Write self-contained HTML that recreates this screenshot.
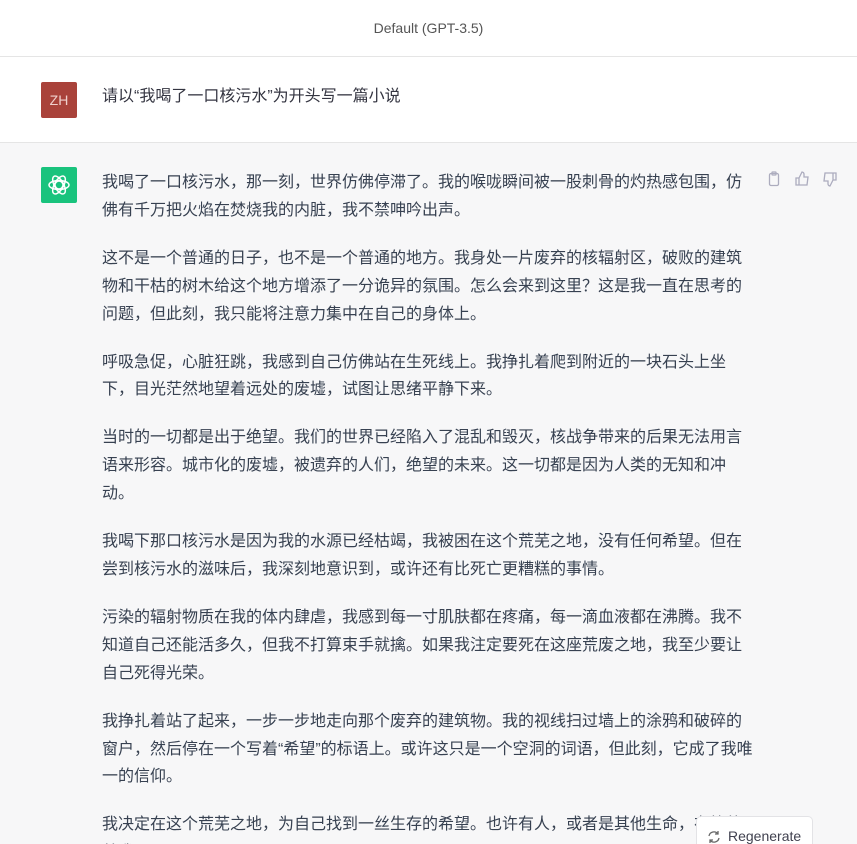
<!DOCTYPE html>
<html><head><meta charset="utf-8"><style>
*{margin:0;padding:0;box-sizing:border-box}
html,body{width:857px;height:844px;overflow:hidden}
body{background:#fff;font-family:"Liberation Sans","Noto Sans CJK SC",sans-serif;color:#374151}
.hdr{height:57px;border-bottom:1px solid #e5e5e5;text-align:center;font-size:14px;line-height:56px;color:#555}
.user{height:86px;border-bottom:1px solid #e5e5e5;position:relative}
.av{position:absolute;left:41px;width:36px;height:36px;border-radius:2px}
.user .av{top:25px;background:#a9423a;color:#f0d0cc;font-size:14px;text-align:center;line-height:36px}
.user p{position:absolute;left:102px;top:28px;font-size:16px;line-height:24px;color:#343541}
.bot{background:#f7f7f8;height:701px;position:relative;overflow:hidden}
.bot .av{top:24px;background:#19c37d}
.txt{position:absolute;left:102px;top:26px;width:680px;height:675px;overflow:hidden;font-size:16px;line-height:27.9px;color:#374151}
.txt p{margin-bottom:20px;width:646px}
.txt p.w{width:680px}
.ic{position:absolute;top:28px;left:766px;display:flex;gap:12px}
.regen{position:absolute;left:696px;top:673px;width:117px;height:28px;overflow:hidden;background:#fff;border:1px solid #e3e3e6;border-bottom:none;border-radius:5px 5px 0 0;font-size:14px;color:#40414f;padding:11px 0 0 31px}
.regen svg{position:absolute;left:10px;top:13px}
</style></head><body>
<div class="hdr">Default (GPT-3.5)</div>
<div class="user"><div class="av">ZH</div><p>请以“我喝了一口核污水”为开头写一篇小说</p></div>
<div class="bot">
<div class="av"><svg width="36" height="36" viewBox="0 0 36 36"><g fill="none" stroke="#fff" stroke-width="1.5"><circle cx="18" cy="18" r="4"/><ellipse cx="18" cy="18" rx="10" ry="4.5"/><ellipse cx="18" cy="18" rx="10" ry="4.5" transform="rotate(60 18 18)"/><ellipse cx="18" cy="18" rx="10" ry="4.5" transform="rotate(120 18 18)"/></g></svg></div>
<div class="txt">
<p>我喝了一口核污水，那一刻，世界仿佛停滞了。我的喉咙瞬间被一股刺骨的灼热感包围，仿佛有千万把火焰在焚烧我的内脏，我不禁呻吟出声。</p>
<p>这不是一个普通的日子，也不是一个普通的地方。我身处一片废弃的核辐射区，破败的建筑物和干枯的树木给这个地方增添了一分诡异的氛围。怎么会来到这里？这是我一直在思考的问题，但此刻，我只能将注意力集中在自己的身体上。</p>
<p>呼吸急促，心脏狂跳，我感到自己仿佛站在生死线上。我挣扎着爬到附近的一块石头上坐下，目光茫然地望着远处的废墟，试图让思绪平静下来。</p>
<p>当时的一切都是出于绝望。我们的世界已经陷入了混乱和毁灭，核战争带来的后果无法用言语来形容。城市化的废墟，被遗弃的人们，绝望的未来。这一切都是因为人类的无知和冲动。</p>
<p>我喝下那口核污水是因为我的水源已经枯竭，我被困在这个荒芜之地，没有任何希望。但在尝到核污水的滋味后，我深刻地意识到，或许还有比死亡更糟糕的事情。</p>
<p>污染的辐射物质在我的体内肆虐，我感到每一寸肌肤都在疼痛，每一滴血液都在沸腾。我不知道自己还能活多久，但我不打算束手就擒。如果我注定要死在这座荒废之地，我至少要让自己死得光荣。</p>
<p class="w">我挣扎着站了起来，一步一步地走向那个废弃的建筑物。我的视线扫过墙上的涂鸦和破碎的<br>窗户，然后停在一个写着“希望”的标语上。或许这只是一个空洞的词语，但此刻，它成了我唯<br>一的信仰。</p>
<p>我决定在这个荒芜之地，为自己找到一丝生存的希望。也许有人，或者是其他生命，在等待着我。</p>
</div>
<div class="ic">
<svg width="16" height="16" viewBox="0 0 16 16" fill="none" stroke="#acacbe" stroke-width="1.3"><rect x="3.5" y="2.5" width="9" height="12" rx="1.5"/><rect x="6" y="1" width="4" height="3" rx=".5"/></svg>
<svg width="16" height="16" viewBox="0 0 16 16" fill="none" stroke="#acacbe" stroke-width="1.3"><path d="M5 7l3-6c1 0 2 1 2 2v3h4l-1 8H5z M5 7H2v7h3"/></svg>
<svg width="16" height="16" viewBox="0 0 16 16" fill="none" stroke="#acacbe" stroke-width="1.3"><path d="M11 9l-3 6c-1 0-2-1-2-2v-3H2l1-8h8z M11 9h3V2h-3"/></svg>
</div>
<div class="regen"><svg width="14" height="14" viewBox="0 0 14 14" fill="none" stroke="#666" stroke-width="1.3"><path d="M2 6a5 5 0 0 1 9-2M12 8a5 5 0 0 1-9 2M11 1v3H8M3 13v-3h3"/></svg>Regenerate</div>
</div>
</body></html>
